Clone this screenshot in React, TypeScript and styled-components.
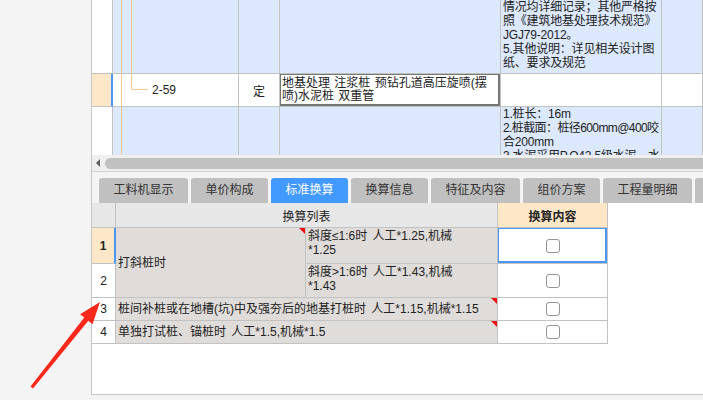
import React from "react"
import styled, { createGlobalStyle, css } from "styled-components"

const GlobalStyle = createGlobalStyle`
  html, body {
    margin: 0;
    padding: 0;
  }
  body {
    font-family: "Liberation Sans", "Noto Sans CJK SC", sans-serif;
    font-size: 12px;
    color: #222;
    background: #f4f4f4;
  }
`

const GRID_LINE = "#c2c2c2"
const ROW_BLUE = "#dce9fc"
const ROW_ORANGE = "#fde7c9"
const TREE = "#f9c98e"
const SELECT_BLUE = "#4a97f3"

const Screen = styled.div`
  position: relative;
  width: 703px;
  height: 400px;
  display: flex;
  background: #f4f4f4;
  overflow: hidden;
`

const SidePane = styled.div`
  width: 91px;
  flex: none;
`

const MainPane = styled.div`
  flex: 1;
  min-width: 0;
  height: 395px;
  box-sizing: border-box;
  border-left: 1px solid #c6c6c6;
  border-bottom: 1px solid #c6c6c6;
  display: flex;
  flex-direction: column;
`

// one line of cell text
const Line = styled.div<{ $h?: number; $tight?: boolean }>`
  line-height: ${({ $h }) => $h ?? 14}px;
  white-space: nowrap;
  ${({ $tight }) => $tight && "letter-spacing: -0.6px;"}
`

/* ---------- upper grid (清单/定额) ---------- */

const TopGrid = styled.div`
  flex: none;
  height: 155px;
  display: grid;
  grid-template-columns: 21px 126px 41px 221px 161px 1fr;
  grid-template-rows: 74px 33px 60px;
  background: #fff;
  overflow: hidden;
`

const Cell = styled.div<{ $bg?: string }>`
  position: relative;
  box-sizing: border-box;
  border-right: 1px solid ${GRID_LINE};
  border-bottom: 1px solid ${GRID_LINE};
  background: ${({ $bg }) => $bg ?? "#fff"};
  overflow: hidden;
  word-spacing: 2px;
`

const RowHead = styled(Cell)<{ $selected?: boolean }>`
  ${({ $selected }) =>
    $selected &&
    css`
      background: ${ROW_ORANGE};
      border-right: 2px solid ${SELECT_BLUE};
    `}
`

const line = (x: number, w: string, h: string, y = "0") =>
  `linear-gradient(${TREE}, ${TREE}) ${x}px ${y} / ${w} ${h} no-repeat`

const TreeCell = styled(Cell)<{ $variant: "through" | "branch" | "trunk" }>`
  display: flex;
  align-items: center;
  padding-left: 39px;
  background: ${({ $variant }) =>
    $variant === "through"
      ? `${line(8, "1px", "100%")}, ${line(18, "1px", "100%")}, ${ROW_BLUE}`
      : $variant === "branch"
      ? `${line(8, "1px", "100%")}, ${line(18, "1px", "16px")}, ${line(18, "17px", "1px", "15px")}, #fff`
      : `${line(8, "1px", "100%")}, ${ROW_BLUE}`};
`

const KindCell = styled(Cell)`
  display: flex;
  align-items: center;
  justify-content: center;
`

const NameCell = styled(Cell)`
  display: flex;
  flex-direction: column;
  justify-content: center;
  padding-left: 2px;
  word-spacing: 1px;

  &::after {
    content: "";
    position: absolute;
    top: -1px;
    left: -1px;
    right: 0;
    bottom: 0;
    border: 2px solid #767676;
  }
`

const NoteCell = styled(Cell)`
  padding: 0 0 0 2px;
  letter-spacing: -0.2px;
`

/* ---------- scrollbar ---------- */

const HScroll = styled.div`
  flex: none;
  height: 17px;
  box-sizing: border-box;
  border-bottom: 1px solid #d2d2d2;
  background: #efefef;
  display: flex;
  align-items: center;
  padding-left: 4px;
  overflow: hidden;
`

const ScrollArrow = styled.span`
  width: 0;
  height: 0;
  border-top: 4px solid transparent;
  border-bottom: 4px solid transparent;
  border-right: 4px solid #5e5e5e;
`

const ScrollThumb = styled.span`
  flex: 1;
  height: 11px;
  margin: 0 -12px 0 5px;
  border-radius: 6px;
  background: #c1c1c1;
`

/* ---------- tabs ---------- */

const TabStrip = styled.div`
  flex: none;
  height: 31px;
  box-sizing: border-box;
  padding: 6px 0 0 7px;
  display: flex;
  align-items: flex-end;
  gap: 3px;
  overflow: hidden;
  white-space: nowrap;
`

const Tab = styled.div<{ $active?: boolean }>`
  flex: none;
  min-width: 20px;
  height: 25px;
  line-height: 25px;
  padding: 0 14.5px;
  border-radius: 3px 3px 0 0;
  background: ${({ $active }) => ($active ? "#4299fe" : "#c0c0c0")};
  color: ${({ $active }) => ($active ? "#fff" : "#333")};
  font-size: 12px;
`

/* ---------- lower grid (换算列表) ---------- */

const BottomPane = styled.div`
  flex: 1;
  background: #fff;
`

const RuleGrid = styled.div`
  display: grid;
  grid-template-columns: 24px 190px 192px 110px;
  grid-template-rows: 25px 36px 34px 23px 23px;
`

const HeadCell = styled(Cell)<{ $span?: number; $accent?: boolean }>`
  grid-column: span ${({ $span }) => $span ?? 1};
  display: flex;
  align-items: center;
  justify-content: center;
  background: ${({ $accent }) => ($accent ? "#fde7c7" : "#e7e7e7")};
  font-weight: ${({ $accent }) => ($accent ? 700 : 400)};
  color: #222;
`

const NumCell = styled(Cell)<{ $selected?: boolean }>`
  display: flex;
  align-items: center;
  justify-content: center;
  ${({ $selected }) =>
    $selected &&
    css`
      background: ${ROW_ORANGE};
      border-right: 2px solid ${SELECT_BLUE};
      font-weight: 700;
    `}
`

const RuleCell = styled(Cell)<{ $cols?: number; $rows?: number; $top?: boolean }>`
  grid-column: span ${({ $cols }) => $cols ?? 1};
  grid-row: span ${({ $rows }) => $rows ?? 1};
  background: #e0dcda;
  padding: ${({ $top }) => ($top ? "1px 0 0 2px" : "0 0 0 2px")};
  display: flex;
  flex-direction: column;
  justify-content: ${({ $top }) => ($top ? "flex-start" : "center")};
`

const Marker = styled.span`
  position: absolute;
  top: 0;
  right: 0;
  width: 0;
  height: 0;
  border-top: 6px solid #ee1010;
  border-left: 6px solid transparent;
`

const CheckCell = styled(Cell)<{ $selected?: boolean }>`
  display: flex;
  align-items: center;
  justify-content: center;
  ${({ $selected }) =>
    $selected &&
    css`
      &::after {
        content: "";
        position: absolute;
        top: -1px;
        left: -1px;
        right: 0;
        bottom: 0;
        border: 2px solid ${SELECT_BLUE};
      }
    `}
`

const CheckBox = styled.span`
  width: 14px;
  height: 14px;
  box-sizing: border-box;
  border: 1px solid #949494;
  border-radius: 3px;
  background: #fff;
`

const Pointer = styled.svg`
  position: absolute;
  left: 0;
  top: 0;
  pointer-events: none;
`

// the last tab runs off the right edge; its label is not visible
const tabs = ["工料机显示", "单价构成", "标准换算", "换算信息", "特征及内容", "组价方案", "工程量明细", ""]

export default function App() {
  return (
    <>
      <GlobalStyle />
      <Screen>
        <SidePane />
        <MainPane>
          <TopGrid>
            <RowHead />
            <TreeCell $variant="through" />
            <Cell $bg={ROW_BLUE} />
            <Cell $bg={ROW_BLUE} />
            <NoteCell $bg={ROW_BLUE}>
              <Line>情况均详细记录；其他严格按</Line>
              <Line>照《建筑地基处理技术规范》</Line>
              <Line>JGJ79-2012。</Line>
              <Line>5.其他说明：详见相关设计图</Line>
              <Line>纸、要求及规范</Line>
            </NoteCell>
            <Cell $bg={ROW_BLUE} />

            <RowHead $selected />
            <TreeCell $variant="branch">2-59</TreeCell>
            <KindCell>定</KindCell>
            <NameCell>
              <Line $h={13.5}>地基处理 注浆桩 预钻孔道高压旋喷(摆</Line>
              <Line $h={13.5}>喷)水泥桩 双重管</Line>
            </NameCell>
            <Cell />
            <Cell />

            <RowHead />
            <TreeCell $variant="trunk" />
            <Cell $bg={ROW_BLUE} />
            <Cell $bg={ROW_BLUE} />
            <NoteCell $bg={ROW_BLUE}>
              <Line>1.桩长：16m</Line>
              <Line $tight>2.桩截面：桩径600mm@400咬</Line>
              <Line>合200mm</Line>
              <Line>3.水泥采用P.O42.5级水泥，水</Line>
            </NoteCell>
            <Cell $bg={ROW_BLUE} />
          </TopGrid>

          <HScroll>
            <ScrollArrow />
            <ScrollThumb />
          </HScroll>

          <TabStrip>
            {tabs.map((t, i) => (
              <Tab key={i} $active={t === "标准换算"}>
                {t}
              </Tab>
            ))}
          </TabStrip>

          <BottomPane>
            <RuleGrid>
              <HeadCell />
              <HeadCell $span={2}>换算列表</HeadCell>
              <HeadCell $accent>换算内容</HeadCell>

              <NumCell $selected>1</NumCell>
              <RuleCell $rows={2}>
                <Line>打斜桩时</Line>
                <Marker />
              </RuleCell>
              <RuleCell $top>
                <Line>斜度≤1:6时 人工*1.25,机械</Line>
                <Line>*1.25</Line>
              </RuleCell>
              <CheckCell $selected>
                <CheckBox />
              </CheckCell>

              <NumCell>2</NumCell>
              <RuleCell $top>
                <Line>斜度&gt;1:6时 人工*1.43,机械</Line>
                <Line>*1.43</Line>
              </RuleCell>
              <CheckCell>
                <CheckBox />
              </CheckCell>

              <NumCell>3</NumCell>
              <RuleCell $cols={2}>
                <Line>桩间补桩或在地槽(坑)中及强夯后的地基打桩时 人工*1.15,机械*1.15</Line>
                <Marker />
              </RuleCell>
              <CheckCell>
                <CheckBox />
              </CheckCell>

              <NumCell>4</NumCell>
              <RuleCell $cols={2}>
                <Line>单独打试桩、锚桩时 人工*1.5,机械*1.5</Line>
                <Marker />
              </RuleCell>
              <CheckCell>
                <CheckBox />
              </CheckCell>
            </RuleGrid>
          </BottomPane>
        </MainPane>

        <Pointer width="703" height="400" viewBox="0 0 703 400">
          <polygon
            points="30.5,386.5 33,388.5 88.3,320.8 92.5,324.2 100,302 80.1,314.2 84.3,317.6"
            fill="#f8281a"
          />
        </Pointer>
      </Screen>
    </>
  )
}
